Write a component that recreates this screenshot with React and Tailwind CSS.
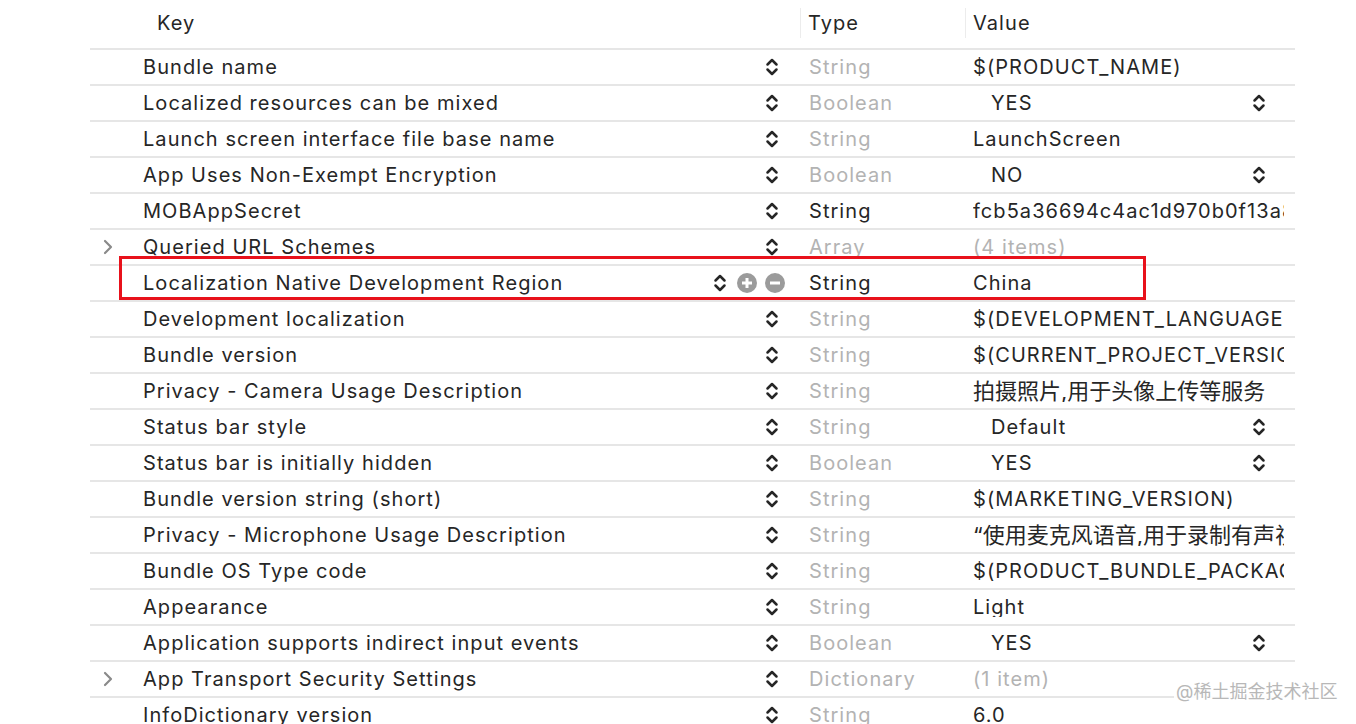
import React from 'react';

const rows = [
  { key: 'Bundle name', type: 'String', value: '$(PRODUCT_NAME)' },
  { key: 'Localized resources can be mixed', type: 'Boolean', value: 'YES', pick: true },
  { key: 'Launch screen interface file base name', type: 'String', value: 'LaunchScreen' },
  { key: 'App Uses Non-Exempt Encryption', type: 'Boolean', value: 'NO', pick: true },
  { key: 'MOBAppSecret', type: 'String', value: 'fcb5a36694c4ac1d970b0f13a8e', typeDark: true },
  { key: 'Queried URL Schemes', type: 'Array', value: '(4 items)', group: true },
  { key: 'Localization Native Development Region', type: 'String', value: 'China', typeDark: true, selected: true },
  { key: 'Development localization', type: 'String', value: '$(DEVELOPMENT_LANGUAGE)' },
  { key: 'Bundle version', type: 'String', value: '$(CURRENT_PROJECT_VERSION)' },
  { key: 'Privacy - Camera Usage Description', type: 'String', value: '拍摄照片,用于头像上传等服务', cjk: true },
  { key: 'Status bar style', type: 'String', value: 'Default', pick: true },
  { key: 'Status bar is initially hidden', type: 'Boolean', value: 'YES', pick: true },
  { key: 'Bundle version string (short)', type: 'String', value: '$(MARKETING_VERSION)' },
  { key: 'Privacy - Microphone Usage Description', type: 'String', value: '“使用麦克风语音,用于录制有声视频', cjk: true },
  { key: 'Bundle OS Type code', type: 'String', value: '$(PRODUCT_BUNDLE_PACKAGE_TYPE)' },
  { key: 'Appearance', type: 'String', value: 'Light' },
  { key: 'Application supports indirect input events', type: 'Boolean', value: 'YES', pick: true },
  { key: 'App Transport Security Settings', type: 'Dictionary', value: '(1 item)', group: true },
  { key: 'InfoDictionary version', type: 'String', value: '6.0' },
];

const Stepper = () => (
  <svg width="16" height="24" viewBox="0 0 16 24" fill="none" stroke="#262626" strokeWidth="2.5" strokeLinecap="round" strokeLinejoin="round">
    <path d="M3.5 9.5 L8 5 L12.5 9.5" />
    <path d="M3.5 14.5 L8 19 L12.5 14.5" />
  </svg>
);

const CircleBtn = ({ plus }) => (
  <svg width="20" height="20" viewBox="0 0 20 20">
    <circle cx="10" cy="10" r="10" fill="#9b9b9b" />
    <path d="M5 10 H15" stroke="#fff" strokeWidth="3" />
    {plus && <path d="M10 5 V15" stroke="#fff" strokeWidth="3" />}
  </svg>
);

const Chevron = () => (
  <svg width="12" height="18" viewBox="0 0 12 18" fill="none" stroke="#8a8a8a" strokeWidth="2.2" strokeLinecap="round" strokeLinejoin="round">
    <path d="M3 3 L9 9 L3 15" />
  </svg>
);

export default function App() {
  return (
    <div className="relative h-[724px] w-[1356px] overflow-hidden bg-white text-[20px] tracking-[1.05px] text-[#262626]" style={{ fontFamily: 'Inter, "Noto Sans CJK SC", sans-serif' }}>
      <div className="ml-[90px] w-[1205px]">
        {/* Header */}
        <div className="flex h-[50px] items-center border-b-2 border-[#e6e6e6] pb-[2px]">
          <div className="w-[710px] pl-[67px]">Key</div>
          <div className="h-[30px] w-px bg-[#ececec]" />
          <div className="w-[164px] pl-[7px]">Type</div>
          <div className="h-[30px] w-px bg-[#ececec]" />
          <div className="pl-[7px]">Value</div>
        </div>

        {rows.map((r) => (
          <div key={r.key} className="flex h-[36px] items-center border-b-2 border-[#e6e6e6] leading-none">
            <div className="flex w-[53px] items-center pl-[12px]">{r.group && <Chevron />}</div>
            <div className="w-[566px] whitespace-nowrap">{r.key}</div>
            {r.selected ? (
              <div className="flex w-[100px] items-center justify-end gap-[8px] pr-[24px]">
                <div className="mr-[1px]"><Stepper /></div>
                <CircleBtn plus />
                <CircleBtn />
              </div>
            ) : (
              <div className="flex w-[100px] items-center justify-end pr-[29px]">
                <Stepper />
              </div>
            )}
            <div className={`w-[164px] ${r.typeDark ? 'text-[#262626]' : 'text-[#b3b3b3]'}`}>{r.type}</div>
            <div className="flex w-[322px] items-center overflow-hidden whitespace-nowrap">
              {r.pick ? (
                <>
                  <span className="w-[278px] pl-[18px]">{r.value}</span>
                  <Stepper />
                </>
              ) : r.cjk ? (
                <span className="block w-[311px] overflow-hidden text-[22px] tracking-normal">{r.value}</span>
              ) : (
                <span className={`block w-[311px] overflow-hidden ${r.group ? 'text-[#b3b3b3]' : ''}`}>{r.value}</span>
              )}
            </div>
          </div>
        ))}
      </div>

      {/* selection outline */}
      <div className="absolute left-[119px] top-[256px] h-[44px] w-[1027px] border-[3px] border-[#e8111b]" />

      {/* watermark */}
      <div className="absolute left-[1174px] top-[680px] bg-white/90 px-[2px] text-[18px] leading-[24px] tracking-normal text-[#b8b8b8]">@稀土掘金技术社区</div>
    </div>
  );
}
